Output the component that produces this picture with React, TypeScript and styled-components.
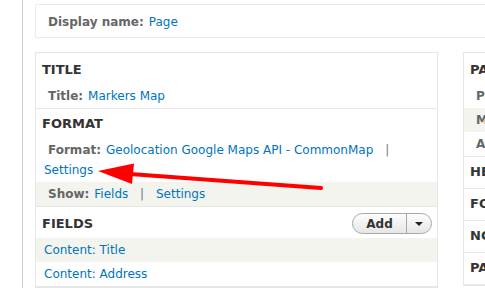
import styled, { createGlobalStyle } from "styled-components";

const GlobalStyle = createGlobalStyle`
  * {
    box-sizing: border-box;
  }
  body {
    margin: 0;
    overflow: hidden;
    background: #fff;
    font-family: "DejaVu Sans", Verdana, sans-serif;
    font-size: 12px;
    color: #333;
  }
`;

const Root = styled.div`
  position: relative;
  width: 485px;
  height: 288px;
  overflow: hidden;
`;

const Page = styled.div`
  margin-left: 22px;
  border-left: 1px solid #d0d0d0;
  min-height: 288px;
  width: 720px;
  padding: 4px 0 0 12px;
`;

const DisplayBox = styled.div`
  display: flex;
  align-items: center;
  height: 34px;
  width: 680px;
  padding: 1px 12px 0;
  border: 1px solid #ebebeb;
`;

const Columns = styled.div`
  display: grid;
  grid-template-columns: 403px 240px;
  column-gap: 25px;
  align-items: start;
  margin-top: 14px;
`;

const Panel = styled.div`
  border: 1px solid #e6e6e6;
  padding-top: 2px;
`;

const Section = styled.div`
  min-height: 32px;
  border-bottom: 1px solid #e8e8e8;
`;

const Header = styled.div`
  padding: 7px 6px 6px;
  line-height: 16px;
  font-size: 13px;
  font-weight: bold;
  color: #333;
  text-transform: uppercase;
  white-space: nowrap;
`;

const FieldsHeader = styled(Header)`
  display: flex;
  align-items: center;
  justify-content: space-between;
  height: 31px;
  padding: 2px 5px 0 6px;
`;

const Row = styled.div<{ $striped?: boolean }>`
  padding: 2px 8px;
  line-height: 20px;
  background: ${(p) => (p.$striped ? "#f3f4ee" : "transparent")};
`;

const Label = styled.span`
  font-weight: bold;
  color: #666;
  margin: 0 5px 0 4px;
  white-space: nowrap;
`;

const Link = styled.a`
  color: #0074bd;
  text-decoration: none;
  cursor: pointer;
`;

const Sep = styled.span`
  color: #777;
  margin: 0 8px;
`;

const SplitButton = styled.div`
  display: flex;
  width: 80px;
  height: 21px;
  border: 1px solid #a8a8a8;
  border-radius: 11px;
  background: linear-gradient(#fdfdfd, #e6e6e6);
  overflow: hidden;
  text-transform: none;
`;

const ButtonMain = styled.span`
  flex: 0 0 53px;
  display: flex;
  align-items: center;
  justify-content: center;
  font-size: 12px;
  font-weight: bold;
  color: #333;
`;

const ButtonCaret = styled.span`
  flex: 1;
  display: flex;
  align-items: center;
  justify-content: center;
  border-left: 1px solid #a8a8a8;

  &::after {
    content: "";
    border-left: 4px solid transparent;
    border-right: 4px solid transparent;
    border-top: 4px solid #222;
    margin-top: 1px;
  }
`;

const Overlay = styled.svg`
  position: absolute;
  left: 0;
  top: 0;
  pointer-events: none;
`;

export default function App() {
  return (
    <Root>
      <GlobalStyle />
      <Page>
        <DisplayBox>
          <Label style={{ marginLeft: 0 }}>Display name:</Label>
          <Link>Page</Link>
        </DisplayBox>
        <Columns>
          <Panel>
            <Section>
              <Header>Title</Header>
              <Row>
                <Label>Title:</Label>
                <Link>Markers Map</Link>
              </Row>
            </Section>
            <Section>
              <Header>Format</Header>
              <Row>
                <Label>Format:</Label>
                <Link>Geolocation Google Maps API - CommonMap</Link>{" "}
                <Sep>|</Sep> <Link>Settings</Link>
              </Row>
              <Row $striped>
                <Label>Show:</Label>
                <Link>Fields</Link> <Sep>|</Sep> <Link>Settings</Link>
              </Row>
            </Section>
            <Section>
              <FieldsHeader>
                <span>Fields</span>
                <SplitButton>
                  <ButtonMain>Add</ButtonMain>
                  <ButtonCaret />
                </SplitButton>
              </FieldsHeader>
              <Row $striped>
                <Link>Content: Title</Link>
              </Row>
              <Row>
                <Link>Content: Address</Link>
              </Row>
            </Section>
          </Panel>
          <Panel>
            <Section>
              <Header>Page settings</Header>
              <Row>
                <Label>Path:</Label>
                <Link>/markers-map</Link>
              </Row>
              <Row $striped>
                <Label>Menu:</Label>
                <Link>No menu</Link>
              </Row>
              <Row>
                <Label>Access:</Label>
                <Link>Permission</Link>
              </Row>
            </Section>
            <Section>
              <Header>Header</Header>
            </Section>
            <Section>
              <Header>Footer</Header>
            </Section>
            <Section>
              <Header>No results behavior</Header>
            </Section>
            <Section>
              <Header>Pager</Header>
            </Section>
          </Panel>
        </Columns>
      </Page>
      <Overlay width="485" height="288" viewBox="0 0 485 288">
        <line
          x1="321"
          y1="188"
          x2="130"
          y2="174"
          stroke="#ff0000"
          strokeWidth="4"
          strokeLinecap="round"
        />
        <polygon points="98,171 134,163.5 132,184" fill="#ff0000" />
      </Overlay>
    </Root>
  );
}
